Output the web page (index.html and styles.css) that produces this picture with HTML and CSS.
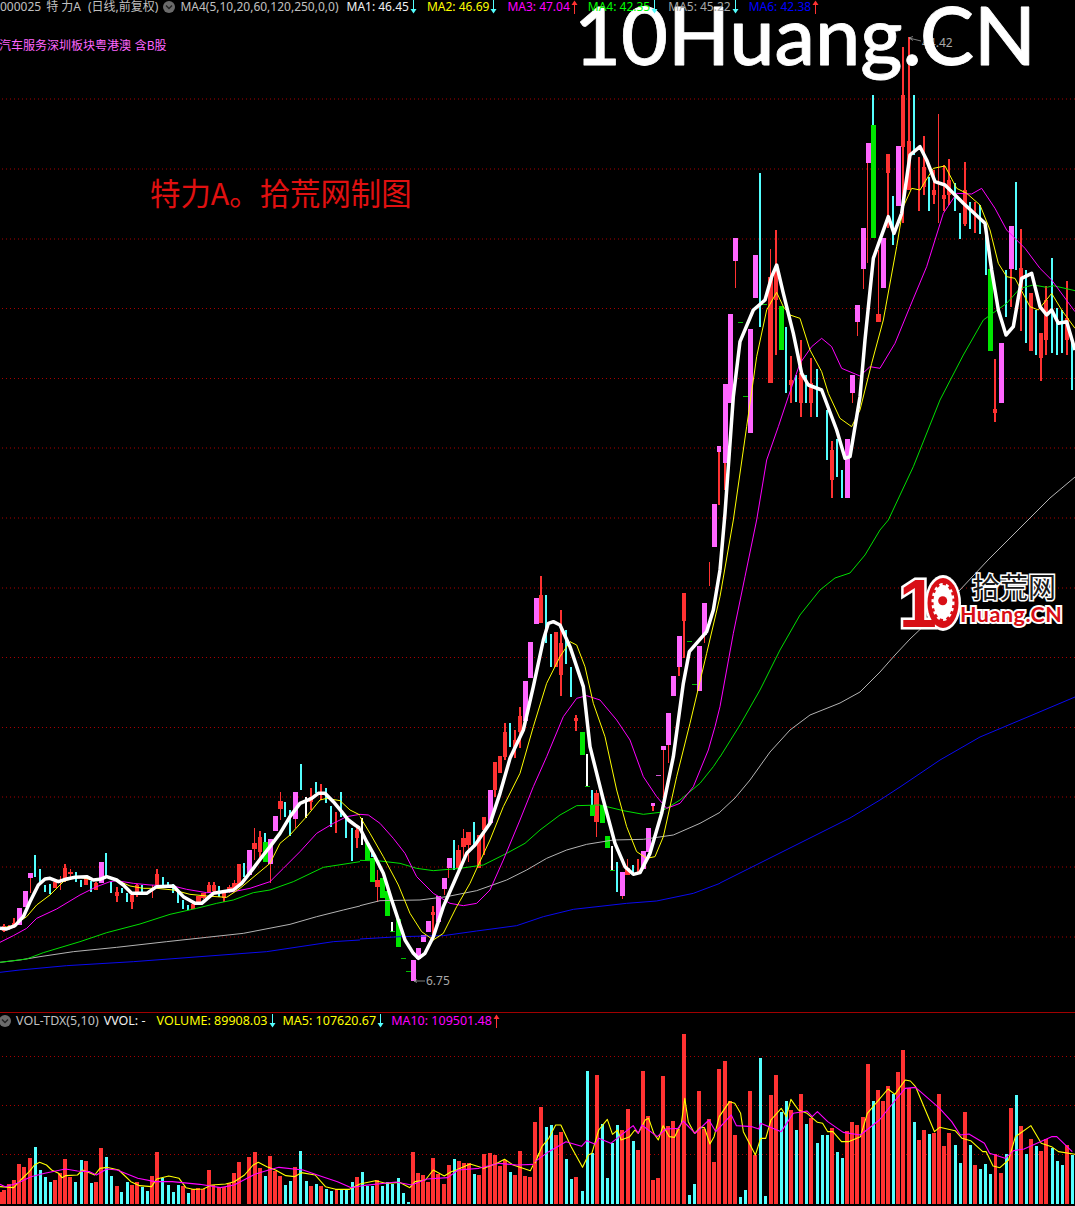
FILE: index.html
```html
<!DOCTYPE html>
<html lang="zh">
<head>
<meta charset="utf-8">
<title>000025 特力A</title>
<link rel="stylesheet" href="styles.css">
</head>
<body>
<svg width="0" height="0" class="defs">
  <defs>
    <symbol id="down" viewBox="0 0 7 14"><path d="M3.5 0V11" class="ar-c"/><path d="M0.5 9H6.5L3.5 13.5Z" class="ar-cf"/></symbol>
    <symbol id="up" viewBox="0 0 7 14"><path d="M3.5 3V14" class="ar-r"/><path d="M0.5 5H6.5L3.5 0.5Z" class="ar-rf"/></symbol>
    <symbol id="chev" viewBox="0 0 12 12"><circle cx="6" cy="6" r="6" class="chev-bg"/><path d="M3 4.6L6 7.6L9 4.6" class="chev-line"/></symbol>
  </defs>
</svg>
<main class="terminal">
  <section class="pane pane-price">
    <svg class="chart" width="1075" height="1012" viewBox="0 0 1075 1012">
      <g class="grid">
        <path d="M2 99H1075M2 169H1075M2 239H1075M2 308.500H1075M2 378.500H1075M2 448H1075M2 518H1075M2 588H1075M2 657.500H1075M2 727.500H1075M2 797H1075M2 867H1075M2 937H1075"/>
      </g>
      <g class="z" transform="translate(0 760) scale(.33333)">
        <path class="w red" d="M12 492V515M27 495V510M42 475V505M91 353V400M165 367V385M181 348V390M195 312V365M212 327V352M258 355V375M288 365V390M351 380V425M396 395V447M411 372V410M457 375V413M471 328V380M579 425V447M595 408V425M610 398V417M627 365V398M642 365V398M672 395V427M688 375V400M703 360V395M764 205V300M780 212V300M811 312V368M841 97V180M886 175V205M933 85V150M963 72V120M1008 155V218M1071 200V263"/>
        <path class="b red" d="M12 497V512M27 500V508M42 490V500M165 367V385M195 325V360M212 335V343M258 355V375M288 370V390M351 395V407M396 405V427M411 375V395M471 343V375M579 432V447M595 408V425M610 400V415M627 375V395M642 375V392M672 400V415M688 380V395M703 370V390M717 313V375M764 250V268M780 230V275M841 122V147M933 110V125M1071 210V235"/>
        <path class="b pink" d="M58 443V495M76 392V442M91 339V353M304 305V368M748 270V345M811 237V312M826 168V213M886 97V177"/>
        <path class="c cyan" d="M104 285V350M120 327V365M135 375V395M150 372V402M229 337V365M243 360V380M273 362V395M319 280V350M334 365V398M366 385V400M381 400V425M427 375V405M490 350V375M505 365V385M520 372V398M535 390V430M550 420V447M565 435V450M658 378V410M733 310V350M795 220V250M856 127V172M871 150V228M902 13V90M948 67V98M978 85V130M994 138V200M1024 97V170M1039 170V235M1056 205V302"/>
        <path class="b green" d="M796 247V305"/>
        <path class="c white" d="M918 110V175"/>
      </g>
      <g class="z" transform="translate(360 560) scale(.33333)">
        <path class="w red" d="M52 930V1027M219 1038V1125M266 925V953M296 855V925M311 808V890M326 815V905M372 770V885M405 605V710M435 490V600M465 510V595M480 440V565M543 48V190M603 150V408M648 465V513M710 690V830M787 1007V1017M803 897V945M834 897V940M879 738V752M910 570V720M925 555V610M957 320V347M972 100V295M1033 225V250M1048 5V78M253 987V1005"/>
        <path class="b red" d="M52 960V980M219 1055V1065M296 870V925M311 835V860M326 815V855M357 825V925M372 770V810M405 605V690M420 587V640M435 515V590M465 540V565M480 468V515M543 105V190M588 215V320M603 250V345M648 475V482M710 700V785M972 100V182M803 925V945"/>
        <path class="b pink" d="M160 1200V1263M175 1163V1198M190 1125V1145M205 1083V1115M235 1008V1085M253 953V987M268 893V925M391 690V790M496 363V483M511 245V353M529 113V192M787 935V1007M850 872V927M865 803V875M879 728V738M910 558V570M925 458V555M940 347V408M958 228V320M1018 257V393M1033 128V225"/>
        <path class="c cyan" d="M36 870V890M283 840V930M342 785V860M450 490V560M558 105V250M574 222V320M618 210V312M633 320V410M695 690V735M772 905V995M819 915V940"/>
        <path class="b green" d="M22 850V900M37 893V965M67 953V1013M82 993V1067M115 1077V1160M667 517V585M697 735V767M727 735V788M742 828V863"/>
        <path class="c white" d="M6 775V855M97 1085V1115M682 583V678M756 857V930"/>
        <path class="d green" d="M90 1115H104M124 1196H137M139 1234H153M675 679H689M750 931H764M982 245H995M997 375H1010"/>
        <path class="d pink" d="M888 648H902"/>
      </g>
      <g class="z" transform="translate(700 80) scale(.33333)">
        <path class="w red" d="M57 1097V1275M75 1140V1230M106 543V623M212 507V908M228 450V825M273 828V970M303 780V1012M333 835V1010M396 1083V1255M457 938V970M472 725V767M490 567V628M503 190V548M535 510V725M564 222V445M609 -100V428M627 -130V330M657 230V392M672 168V345M702 270V372M716 102V430M732 255V392M747 238V375M795 247V437M825 365V460M885 838V1027M933 568V680M963 447V752M993 640V812M1023 760V902M1038 618V825M1101 603V825"/>
        <path class="b red" d="M212 590V908M228 570V660M273 900V915M303 880V970M333 910V970M396 1110V1200M535 702V725M564 222V278M609 45V200M627 182V330M672 260V320M702 330V345M732 345V358M747 300V345M795 330V432M885 988V1000M963 563V630M993 640V812M1023 760V833M1038 660V780M1101 715V780"/>
        <path class="b pink" d="M43 1272V1400M57 1097V1115M76 912V1148M91 702V968M106 474V543M151 748V1058M166 525V653M442 1077V1255M457 885V938M472 675V725M490 445V567M505 188V248M550 475V625M596 198V378M904 788V968M934 437V567"/>
        <path class="c cyan" d="M181 280V740M258 740V940M289 885V965M319 885V970M351 867V1010M382 990V1140M411 1078V1190M427 1170V1255M520 45V135M579 348V495M641 45V225M687 290V392M766 310V392M781 400V478M810 365V447M841 375V462M857 445V585M919 570V710M948 305V570M978 570V790M1009 690V825M1056 535V820M1072 685V825M1086 690V820M1117 780V930"/>
        <path class="b green" d="M244 678V810M520 135V473M871 567V812"/>
        <path class="d green" d="M114 727H128M129 951H143M185 675H200"/>
      </g>
      <g class="lines">
        <g transform="translate(0 760) scale(.33333)">
          <polyline class="ma blue" points="0,637 60,630 200,617 400,605 600,590 800,575 1000,545 1080,540"/>
          <polyline class="ma gray" points="0,607 60,600 120,590 220,575 350,562 500,545 620,532 730,520 870,493 950,470 1030,450 1080,438"/>
          <polyline class="ma green-l" points="0,607 80,597 130,578 240,545 320,518 420,492 510,463 590,445 650,430 700,420 760,398 810,390 880,365 970,322 1080,305"/>
          <polyline class="ma mag" points="0,547 40,527 80,505 110,475 170,447 240,405 290,380 330,365 350,362 400,370 450,375 520,378 560,388 620,398 700,395 750,385 810,365 850,325 900,275 950,220 1000,190 1040,170 1080,163"/>
          <polyline class="ma yel" points="0,505 40,497 80,470 110,435 150,405 190,365 230,350 290,362 320,350 350,360 390,378 430,385 470,385 520,390 570,403 620,408 680,412 720,385 780,335 810,310 840,250 870,225 915,175 960,120 980,115 1020,122 1050,150 1080,165"/>
          <polyline class="ma5" points="0,505 20,507 45,497 70,470 90,425 115,375 135,357 150,355 175,365 200,357 225,352 260,350 280,360 300,358 320,350 350,360 370,375 395,400 440,400 470,380 520,378 550,410 585,430 605,430 640,400 700,390 725,370 760,325 790,285 810,260 840,220 870,170 900,130 935,115 955,100 975,100 1000,125 1025,155 1045,180 1065,195 1080,205"/>
        </g>
        <g transform="translate(360 560) scale(.33333)">
          <polyline class="ma blue" points="0,1137 120,1130 250,1127 350,1113 470,1097 550,1070 640,1048 800,1030 890,1023 1000,1000 1080,970"/>
          <polyline class="ma gray" points="0,1037 60,1022 180,1020 260,1010 350,992 440,960 500,930 560,895 620,870 680,853 760,840 850,838 940,825 1020,790 1080,757"/>
          <polyline class="ma green-l" points="0,901 60,903 120,910 170,925 220,932 300,925 370,915 440,880 495,850 540,810 600,765 650,737 720,735 790,752 850,763 900,757 960,720 1020,670 1060,620 1080,590"/>
          <polyline class="ma mag" points="0,763 25,765 60,790 100,835 135,880 170,950 220,1000 270,1030 310,1037 350,1030 390,990 430,900 480,780 520,680 560,590 610,470 650,415 680,407 720,420 770,480 810,540 850,650 890,710 920,745 960,730 1000,680 1045,570 1065,500 1080,440"/>
          <polyline class="ma yel" points="0,770 30,820 70,890 115,975 150,1060 185,1115 220,1140 250,1120 290,1040 330,970 355,915 390,840 430,740 480,640 520,500 560,370 600,290 630,245 650,255 675,320 700,430 735,530 770,690 800,800 830,875 860,895 885,890 910,830 950,650 990,490 1040,280 1080,110"/>
          <polyline class="ma5" points="0,805 20,845 45,890 70,940 95,1020 115,1080 135,1140 160,1180 175,1195 195,1180 220,1130 250,1040 285,960 320,880 345,855 390,790 420,700 450,595 490,510 520,380 550,240 565,190 580,185 600,195 630,260 670,380 690,560 730,720 765,850 795,920 820,943 840,938 870,880 905,760 940,590 970,370 988,275 1040,215 1060,150 1080,30"/>
        </g>
        <polyline class="ma2 blue" points="720,883 760,863 800,843 850,818 880,800 900,787 940,760 980,737 1030,716 1075,697"/>
        <polyline class="ma2 gray" points="720,812 735,798 750,780 770,752 790,730 810,715 840,703 860,692 880,672 895,655 910,639 930,620 958,592 988,560 1028,520 1050,498 1075,477"/>
        <g transform="translate(700 80) scale(.33333)">
          <polyline class="ma green-l" points="60,2031 120,1935 180,1830 240,1710 300,1605 360,1530 405,1494 450,1479 495,1425 540,1350 565,1320 640,1160 720,960 790,825 850,720 920,670 960,625 1000,615 1040,622 1060,617 1125,632"/>
          <polyline class="ma mag" points="60,1880 100,1660 135,1490 170,1320 200,1140 235,1040 265,950 300,850 335,800 365,775 395,800 425,865 480,888 510,860 540,865 585,790 630,680 680,560 730,400 770,340 815,342 845,325 885,385 920,450 975,505 1020,565 1055,600 1125,695"/>
          <polyline class="ma yel" points="60,1550 100,1320 140,1040 170,830 200,690 230,637 250,680 270,705 300,715 330,810 365,875 385,940 420,1015 455,1040 480,990 515,850 550,720 590,500 610,380 635,325 660,330 700,265 735,258 770,325 800,340 840,375 870,450 895,550 920,590 945,595 990,680 1015,690 1055,640 1085,690 1125,745"/>
          <polyline class="ma5" points="60,1470 75,1300 100,950 120,785 160,690 195,660 215,590 230,555 250,640 280,760 305,880 325,915 365,930 410,1050 435,1135 450,1130 480,950 495,780 520,535 565,410 582,460 605,400 630,225 660,200 680,240 705,305 735,315 790,370 855,430 875,570 895,690 918,765 940,740 965,595 995,580 1020,680 1040,705 1055,690 1075,730 1100,725 1125,810"/>
        </g>
      </g>
      <path class="tick" d="M909 38L921 41M909 38L913 36.500M909 38L913 40.500M414 981H425M414 981L417 979.500M414 981L417 982.500"/>
      <text class="lbl" x="922" y="47">44.42</text>
      <text class="lbl" x="426" y="985">6.75</text>
      <text class="note" x="150" y="205">特力A。拾荒网制图</text>
      <text class="mark" x="574" y="65">10Huang.CN</text>
      <g class="logo" transform="translate(890 560)">
        <ellipse class="logo-halo" cx="53" cy="43" rx="18" ry="28"/>
        <text class="logo-one" x="9" y="67">1</text>
        <ellipse class="logo-zero" cx="53" cy="43" rx="15.500" ry="25"/>
        <ellipse class="logo-gear" cx="53" cy="42" rx="9.500" ry="17"/>
        <circle class="logo-gear-in" cx="52.700" cy="40.700" r="4.500"/>
        <text class="logo-cn" x="82" y="38">拾荒网</text>
        <text class="logo-en" x="70" y="62">Huang.CN</text>
      </g>
    </svg>
    <div class="legend legend-top">
      <span class="t-gray code">000025</span>
      <span class="t-gray cn">特 力A</span>
      <span class="t-gray cn adj">(日线,前复权)</span>
      <svg class="chev"><use href="#chev"/></svg>
      <span class="t-gray ma-params">MA4(5,10,20,60,120,250,0,0)</span>
      <span class="val t-white">MA1: 46.45<svg class="arrow"><use href="#down"/></svg></span>
      <span class="val t-yel">MA2: 46.69<svg class="arrow"><use href="#down"/></svg></span>
      <span class="val t-mag">MA3: 47.04<svg class="arrow"><use href="#up"/></svg></span>
      <span class="val t-grn">MA4: 42.35<svg class="arrow"><use href="#down"/></svg></span>
      <span class="val t-gry2">MA5: 45.22<svg class="arrow"><use href="#down"/></svg></span>
      <span class="val t-blu">MA6: 42.38<svg class="arrow"><use href="#up"/></svg></span>
    </div>
    <div class="sector">汽车服务深圳板块粤港澳 含B股</div>
  </section>
  <section class="pane pane-vol">
    <svg class="chart" width="1075" height="193" viewBox="0 1013 1075 193">
      <path class="grid-v" d="M2 1056.500H1075M2 1105.500H1075M2 1154.500H1075"/>
      <g transform="matrix(.34439 0 0 .33333 0 1005)">
        <path class="v red" d="M0 560V598M12 555V598M26 538V598M41 526V598M55 476V598M70 487V598M86 460V598M160 526V598M175 505V598M189 463V598M204 517V598M249 469V598M279 532V598M293 430V598M339 544V598M383 540V598M398 532V598M442 514V598M456 442V598M532 543V598M561 553V598M576 548V598M590 553V598M606 496V598M620 540V598M635 545V598M650 546V598M664 534V598M679 503V598M694 472V598M723 457V598M740 442V598M755 490V598M785 453V598M799 498V598M813 512V598M857 487V598M903 544V598M932 544V598M977 552V598M1037 517V598M1095 526V598M1199 442V598M1214 505V598M1228 511V598M1243 531V598M1257 460V598M1272 507V598M1289 538V598M1304 481V598M1333 469V598M1347 475V598M1362 474V598M1391 511V598M1406 448V598M1422 445V598M1437 450V598M1452 484V598M1466 465V598M1495 511V598M1510 438V598M1525 514V598M1540 517V598"/>
        <path class="v cyan" d="M102 426V598M117 495V598M131 515V598M146 531V598M219 531V598M236 465V598M265 534V598M309 456V598M323 513V598M354 561V598M370 531V598M413 545V598M428 558V598M472 519V598M489 540V598M503 561V598M518 540V598M547 564V598M770 513V598M829 540V598M843 528V598M872 438V598M890 528V598M918 537V598M948 551V598M962 557V598M991 551V598M1005 556V598M1023 531V598M1052 501V598M1066 543V598M1081 543V598M1110 543V598M1124 531V598M1139 538V598M1157 519V598M1172 564V598M1187 591V598M1319 462V598M1378 507V598M1481 501V598"/>
        <polyline class="vl yel" points="0,545 40,548 60,525 85,500 100,480 115,472 135,480 150,495 170,505 180,518 190,512 225,510 240,495 275,510 290,490 310,487 345,495 360,510 380,530 405,542 440,545 455,522 490,513 520,520 540,548 560,553 590,552 615,540 655,537 680,530 710,510 735,480 750,472 775,485 800,495 830,512 855,515 875,503 915,510 945,545 975,553 1015,553 1045,537 1090,527 1120,535 1160,532 1190,548 1205,530 1235,525 1258,495 1290,513 1310,500 1325,495 1365,477 1405,490 1440,476 1465,463 1490,480 1540,497 1565,445"/>
        <polyline class="vl mag" points="0,538 15,545 50,535 90,515 130,505 190,492 225,498 260,500 280,510 310,492 340,495 400,520 450,530 500,530 580,538 640,548 680,540 740,508 780,495 810,487 880,495 930,513 980,530 1020,548 1060,541 1150,531 1195,540 1240,522 1300,518 1330,495 1390,490 1450,475 1500,480 1550,478"/>
      </g>
      <g transform="matrix(.34439 0 0 .33333 535 1005)">
        <path class="v red" d="M0 351V598M17 305V598M61 390V598M76 380V598M119 515V598M180 211V598M253 376V598M270 313V598M299 436V598M314 199V598M328 334V598M343 526V598M357 520V598M372 214V598M386 364V598M401 349V598M416 371V598M432 87V598M476 259V598M491 372V598M505 343V598M520 472V598M534 193V598M552 169V598M566 289V598M581 391V598M624 259V598M639 451V598M685 271V598M700 211V598M743 316V598M773 268V598M802 338V598M863 370V598M906 379V598M921 352V598M935 361V598M953 337V598M967 178V598M996 256V598M1011 289V598M1025 244V598M1054 202V598M1068 136V598M1086 250V598M1115 406V598M1130 376V598M1159 384V598M1173 268V598M1188 424V598M1202 385V598M1249 322V598M1277 481V598M1337 447V598M1353 505V598M1382 310V598M1411 364V598M1440 403V598M1469 439V598M1484 403V598M1545 421V598"/>
        <path class="v cyan" d="M33 366V598M48 360V598M91 462V598M106 522V598M138 558V598M153 198V598M167 445V598M196 358V598M211 519V598M225 415V598M240 360V598M286 408V598M449 570V598M463 537V598M597 576V598M612 555V598M655 159V598M669 573V598M716 320V598M731 288V598M759 375V598M788 357V598M821 414V598M835 390V598M850 390V598M878 441V598M893 459V598M983 288V598M1041 267V598M1102 351V598M1146 387V598M1221 420V598M1235 474V598M1264 420V598M1293 491V598M1308 477V598M1322 507V598M1369 447V598M1398 270V598M1427 447V598M1456 423V598M1503 429V598M1517 468V598M1531 480V598M1560 450V598"/>
        <polyline class="vl yel" points="0,475 20,425 40,400 60,360 75,360 105,425 138,487 155,450 165,445 185,375 210,343 225,388 240,375 250,405 275,395 290,375 300,385 320,345 330,340 345,385 358,405 372,362 390,395 405,397 425,355 435,280 445,350 463,385 480,367 492,368 508,417 520,395 535,335 565,290 580,295 597,325 605,380 640,450 655,400 670,400 685,345 715,310 730,335 743,283 765,315 790,325 820,352 835,355 850,380 865,380 890,410 910,410 945,395 965,325 1025,252 1045,268 1075,225 1090,228 1105,245 1160,380 1175,367 1220,377 1240,400 1265,407 1300,440 1310,440 1330,483 1350,488 1375,465 1395,395 1440,362 1470,415 1500,425 1520,440 1568,448"/>
        <polyline class="vl mag" points="0,470 40,440 90,410 135,424 150,407 175,418 185,400 220,415 285,362 300,385 310,360 355,395 380,372 415,370 430,348 465,385 505,345 525,380 570,330 585,362 630,365 650,372 655,355 715,380 750,325 790,318 805,335 820,320 850,350 895,382 945,390 1000,345 1035,300 1075,250 1105,247 1175,310 1210,350 1235,390 1260,387 1305,415 1320,445 1365,460 1390,437 1420,432 1500,395 1515,395 1560,440"/>
      </g>
    </svg>
    <div class="legend legend-vol">
      <svg class="chev"><use href="#chev"/></svg>
      <span class="t-gray">VOL-TDX(5,10)</span>
      <span class="t-white vvol">VVOL: -</span>
      <span class="val t-yel">VOLUME: 89908.03<svg class="arrow"><use href="#down"/></svg></span>
      <span class="val t-yel">MA5: 107620.67<svg class="arrow"><use href="#down"/></svg></span>
      <span class="val t-mag">MA10: 109501.48<svg class="arrow"><use href="#up"/></svg></span>
    </div>
  </section>
</main>
</body>
</html>
```
FILE: styles.css
```css
html, body { margin: 0; padding: 0; background: #000; }
body { width: 1075px; height: 1206px; overflow: hidden; font-family: "Noto Sans", "Noto Sans CJK SC", sans-serif; font-size: 12px; }
.defs { position: absolute; }
.terminal { display: flex; flex-direction: column; width: 1075px; }
.pane { position: relative; }
.pane-price { height: 1012px; }
.pane-vol { height: 194px; border-top: 1px solid #a00000; box-sizing: border-box; }
.chart { display: block; }

.legend { position: absolute; display: flex; align-items: center; white-space: nowrap; line-height: 14px; height: 14px; }
.legend-top { left: 0; top: 0; gap: 5px; }
.legend-top .adj { margin-left: 2px; }
.legend-top .ma-params { margin-right: 1px; }
.legend-top .val { margin-left: 2px; }
.legend-vol { left: -1px; top: 0; gap: 5px; margin-top: 1px; font-size: 12.5px; }
.legend-vol .vvol { margin-right: 5px; }
.legend-vol .arrow { margin-right: 1px; }
.val { display: inline-flex; align-items: center; margin-left: 1px; }
.sector { position: absolute; left: -1px; top: 37px; line-height: 16px; color: #ff66ff; word-spacing: 1px; font-family: "Noto Sans CJK SC", "Noto Sans", sans-serif; }

.chev { width: 12px; height: 12px; flex: none; }
.chev-bg { fill: #6b6b6b; }
.chev-line { fill: none; stroke: #222; stroke-width: 1.4; }
.arrow { width: 7px; height: 14px; margin-left: 1px; margin-right: 3px; flex: none; }
.ar-c { stroke: #54ffff; stroke-width: 1; fill: none; }
.ar-cf { fill: #54ffff; }
.ar-r { stroke: #ff3232; stroke-width: 1; fill: none; }
.ar-rf { fill: #ff3232; }

.t-gray { color: #c0c0c0; }
.t-white { color: #f0f0f0; }
.t-yel { color: #ffff00; }
.t-mag { color: #ff00ff; }
.t-grn { color: #00ff00; }
.t-gry2 { color: #a8a8a8; }
.t-blu { color: #0000ff; }

.grid path, .grid-v { fill: none; stroke: #a80000; stroke-width: 1; stroke-dasharray: 1 3; }
.z path, .v { fill: none; shape-rendering: crispEdges; }
.w { stroke-width: 4.5; }
.b { stroke-width: 14; }
.c { stroke-width: 5.5; }
.d { stroke-width: 2.5; }
.v.red { stroke-width: 11; }
.v.cyan { stroke-width: 8.5; }
.red { stroke: #ff3232; }
.pink { stroke: #ff66ff; }
.cyan { stroke: #54ffff; }
.green { stroke: #00e600; }
.white { stroke: #ffffff; }

.ma, .ma2, .ma5, .vl { fill: none; stroke-linejoin: round; }
.ma { stroke-width: 3; }
.ma2 { stroke-width: 1; }
.ma5 { stroke: #fff; stroke-width: 10.5; }
.vl { stroke-width: 1.1; vector-effect: non-scaling-stroke; }
.blue { stroke: #0a0af0; }
.gray { stroke: #b4b4b4; }
.green-l { stroke: #00e000; }
.mag { stroke: #ff00ff; }
.yel { stroke: #ffff00; }

.tick { fill: none; stroke: #a0a0a0; stroke-width: .8; }
.lbl { fill: #a8a8a8; font-size: 12px; }
.note { fill: #e01010; font-size: 30.4px; font-family: "Noto Sans CJK SC", "Noto Sans", sans-serif; }
.mark { fill: #fff; stroke: #fff; stroke-width: .8px; stroke-linejoin: round; font-family: "Lato", sans-serif; font-size: 81px; font-weight: 500; }

.logo-halo { fill: #fff; }
.logo-one { fill: #d80f16; stroke: #fff; stroke-width: 5px; paint-order: stroke; font: bold 68px "Liberation Sans", sans-serif; }
.logo-zero { fill: #d80f16; }
.logo-gear { fill: #fff; stroke: #fff; stroke-width: 4; stroke-dasharray: 3 3; }
.logo-gear-in { fill: #d80f16; }
.logo-cn { fill: #1a1a1a; stroke: #fff; stroke-width: 3px; paint-order: stroke; font: 28px "Noto Sans CJK SC", sans-serif; }
.logo-en { fill: #d80f16; stroke: #fff; stroke-width: 4px; paint-order: stroke; font: bold 21.500px "Lato", sans-serif; letter-spacing: .5px; }
```
